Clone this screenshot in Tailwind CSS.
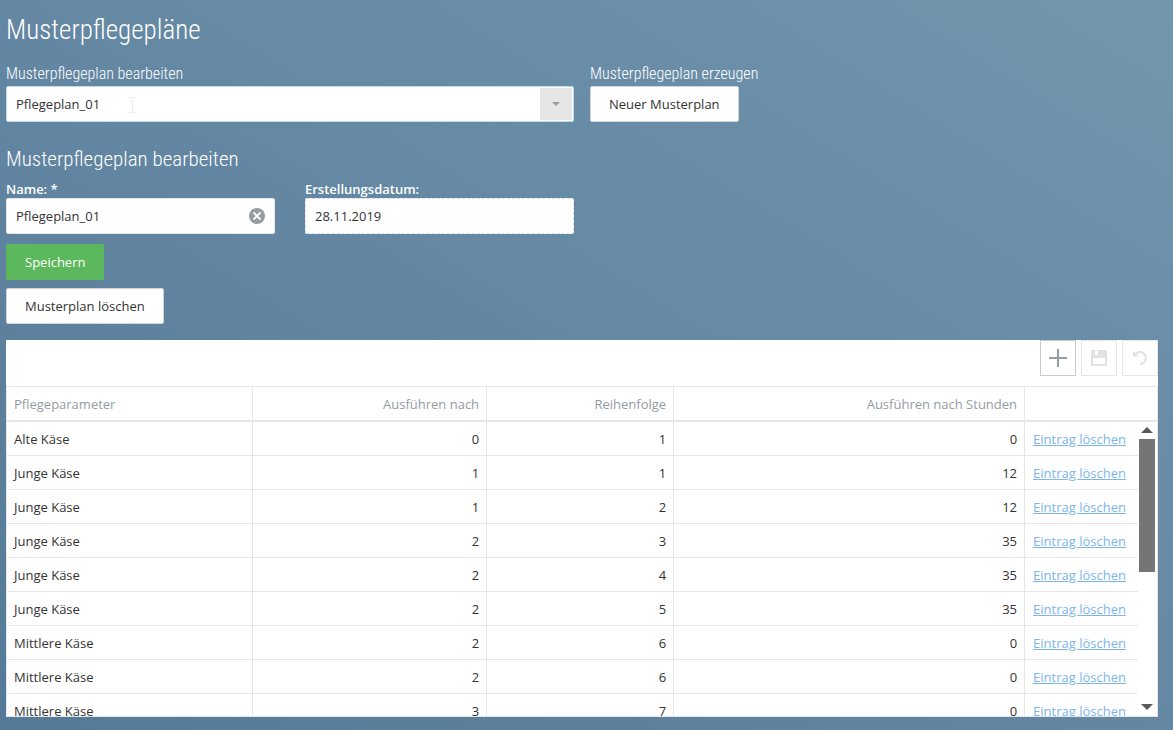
<!DOCTYPE html>
<html lang="de">
<head>
<meta charset="utf-8">
<meta name="viewport" content="width=device-width, initial-scale=1">
<title>Musterpflegepläne</title>
<script src="https://cdn.jsdelivr.net/npm/@tailwindcss/browser@4"></script>
</head>
<body class="flex h-screen flex-col overflow-hidden bg-linear-to-tr from-[#557a97] to-[#7395ae] pt-3 pr-[15px] pb-[13px] pl-[6px] font-['Open_Sans','Noto_Sans',sans-serif] text-[13px] leading-5 text-[#333]">
  <h1 class="font-['Roboto_Condensed','Liberation_Sans_Narrow',Roboto,sans-serif] text-[27px] leading-9 font-light text-white">Musterpflegepläne</h1>

  <section class="mt-[15px] grid grid-cols-2 gap-4">
    <div>
      <label for="plan" class="block pb-px font-['Roboto_Condensed','Liberation_Sans_Narrow',Roboto,sans-serif] text-base leading-[22px] font-light text-white">Musterpflegeplan bearbeiten</label>
      <div class="relative">
        <select id="plan" class="block h-9 w-full appearance-none rounded-xs border border-[#c0dcf0] bg-white pr-10 pl-[9px]">
          <option>Pflegeplan_01</option>
        </select>
        <span class="pointer-events-none absolute top-0.5 right-0.5 flex h-8 w-8 items-center justify-center bg-[#e6e6e6]">
          <svg class="h-1 w-2" viewBox="0 0 8 4" fill="#959ca3"><path d="M0 0h8L4 4z"/></svg>
        </span>
        <svg class="pointer-events-none absolute top-[11px] left-[123px] h-4 w-[7px]" viewBox="0 0 7 16" fill="none" stroke="#ececec"><path d="M0 .5h3M4 .5h3M3.500 1v14M0 15.500h3M4 15.500h3"/></svg>
      </div>
    </div>
    <div>
      <h2 class="pb-px font-['Roboto_Condensed','Liberation_Sans_Narrow',Roboto,sans-serif] text-base leading-[22px] font-light text-white">Musterpflegeplan erzeugen</h2>
      <button type="button" class="block h-9 rounded-xs border border-[#d0d4d8] bg-white px-[18px]">Neuer Musterplan</button>
    </div>
  </section>

  <form class="mt-[23px]">
    <h2 class="font-['Roboto_Condensed','Liberation_Sans_Narrow',Roboto,sans-serif] text-[21px] leading-7 font-light text-white">Musterpflegeplan bearbeiten</h2>
    <div class="grid grid-cols-2 gap-4 pt-[7px]">
      <div class="grid grid-cols-2 gap-[30px]">
        <div>
          <label for="name" class="block leading-[18px] font-semibold text-white">Name: *</label>
          <div class="relative">
            <input id="name" type="text" value="Pflegeplan_01" class="block h-9 w-full rounded-xs border border-[#e6e6e6] bg-white pr-9 pl-[9px]">
            <button type="button" aria-label="Leeren" class="absolute top-2.5 right-2.5">
              <svg class="h-4 w-4" viewBox="0 0 16 16"><circle cx="8" cy="8" r="8" fill="#959ca3"/><path d="M4.500 4.500l7 7M11.500 4.500l-7 7" stroke="#fff" stroke-width="1.800"/></svg>
            </button>
          </div>
        </div>
        <div>
          <label for="datum" class="block leading-[18px] font-semibold text-white">Erstellungsdatum:</label>
          <input id="datum" type="text" readonly value="28.11.2019" class="block h-9 w-full rounded-xs border border-dashed border-[#dcdfe2] bg-white px-[9px]">
        </div>
      </div>
    </div>
    <button type="submit" class="mt-2.5 block h-9 rounded-xs bg-[#5cb85c] px-[19px] text-white">Speichern</button>
    <button type="button" class="mt-2 block h-9 rounded-xs border border-[#d0d4d8] bg-white px-[18px]">Musterplan löschen</button>
  </form>

  <section class="relative mt-4 flex min-h-0 flex-1 flex-col border-b border-[#e6e6e6] bg-white">
    <div class="flex h-[46px] shrink-0 items-start justify-end gap-[5px]">
      <button type="button" aria-label="Hinzufügen" class="flex h-9 w-9 items-center justify-center border border-[#c8ccd0]">
        <svg class="h-[18px] w-[18px]" viewBox="0 0 18 18" stroke="#959ca3" stroke-width="2"><path d="M0 9h18M9 0v18"/></svg>
      </button>
      <button type="button" disabled aria-label="Speichern" class="flex h-9 w-9 items-center justify-center border border-[#e6e6e6]">
        <svg class="h-4 w-4" viewBox="0 0 16 16" fill="#e0e2e4" fill-rule="evenodd"><path d="M0 0h16v16H0zM4 1v4h3V1zM2 8v6h12V8z"/></svg>
      </button>
      <button type="button" disabled aria-label="Rückgängig" class="flex h-9 w-9 items-center justify-center border border-[#e6e6e6]">
        <svg class="h-4 w-4" viewBox="0 0 16 16" fill="none" stroke="#e0e2e4" stroke-width="2.200"><path d="M3 4.500C6 1.500 9.500 1.200 12 3.500c3.200 3 2.500 9.500-4 10.500"/><path d="M1 1v5.500h5.500z" fill="#e0e2e4" stroke="none"/></svg>
      </button>
    </div>
    <div class="min-h-0 flex-1 overflow-hidden border-x border-[#e6e6e6]">
      <table class="w-full table-fixed border-separate border-spacing-0 [&_td]:h-[34px] [&_td]:border-b [&_td]:border-[#e6e6e6] [&_td]:px-[7px] [&_td:last-child]:pl-2 [&_td:not(:last-child)]:border-r [&_th]:h-9 [&_th]:border-t [&_th]:border-b-2 [&_th]:border-[#e6e6e6] [&_th]:px-[7px] [&_th]:font-normal [&_th:not(:last-child)]:border-r [&_td:nth-child(n+2):nth-child(-n+4)]:text-right">
        <colgroup><col class="w-[21.400%]"><col class="w-[20.350%]"><col class="w-[16.260%]"><col class="w-[30.520%]"><col></colgroup>
        <thead class="text-[#959ca3]">
          <tr><th class="text-left">Pflegeparameter</th><th class="text-right">Ausführen nach</th><th class="text-right">Reihenfolge</th><th class="text-right">Ausführen nach Stunden</th><th aria-label="Aktion"></th></tr>
        </thead>
        <tbody>
          <tr><td>Alte Käse</td><td>0</td><td>1</td><td>0</td><td><a href="#" class="text-[#7cb5ec] underline">Eintrag löschen</a></td></tr>
          <tr><td>Junge Käse</td><td>1</td><td>1</td><td>12</td><td><a href="#" class="text-[#7cb5ec] underline">Eintrag löschen</a></td></tr>
          <tr><td>Junge Käse</td><td>1</td><td>2</td><td>12</td><td><a href="#" class="text-[#7cb5ec] underline">Eintrag löschen</a></td></tr>
          <tr><td>Junge Käse</td><td>2</td><td>3</td><td>35</td><td><a href="#" class="text-[#7cb5ec] underline">Eintrag löschen</a></td></tr>
          <tr><td>Junge Käse</td><td>2</td><td>4</td><td>35</td><td><a href="#" class="text-[#7cb5ec] underline">Eintrag löschen</a></td></tr>
          <tr><td>Junge Käse</td><td>2</td><td>5</td><td>35</td><td><a href="#" class="text-[#7cb5ec] underline">Eintrag löschen</a></td></tr>
          <tr><td>Mittlere Käse</td><td>2</td><td>6</td><td>0</td><td><a href="#" class="text-[#7cb5ec] underline">Eintrag löschen</a></td></tr>
          <tr><td>Mittlere Käse</td><td>2</td><td>6</td><td>0</td><td><a href="#" class="text-[#7cb5ec] underline">Eintrag löschen</a></td></tr>
          <tr><td>Mittlere Käse</td><td>3</td><td>7</td><td>0</td><td><a href="#" class="text-[#7cb5ec] underline">Eintrag löschen</a></td></tr>
        </tbody>
      </table>
    </div>
    <!-- Scrollbar over the table body -->
    <div class="absolute top-[82px] right-px bottom-0 flex w-[19px] flex-col items-center bg-white pt-[5px] pr-0.5 pb-1.5">
      <svg class="h-1.5 w-3 shrink-0" viewBox="0 0 12 6" fill="#595959"><path d="M0 6L6 0l6 6z"/></svg>
      <div class="mt-1.5 h-[47%] w-4 bg-[#757575]"></div>
      <svg class="mt-auto h-1.5 w-3 shrink-0" viewBox="0 0 12 6" fill="#595959"><path d="M0 0h12L6 6z"/></svg>
    </div>
  </section>
</body>
</html>
